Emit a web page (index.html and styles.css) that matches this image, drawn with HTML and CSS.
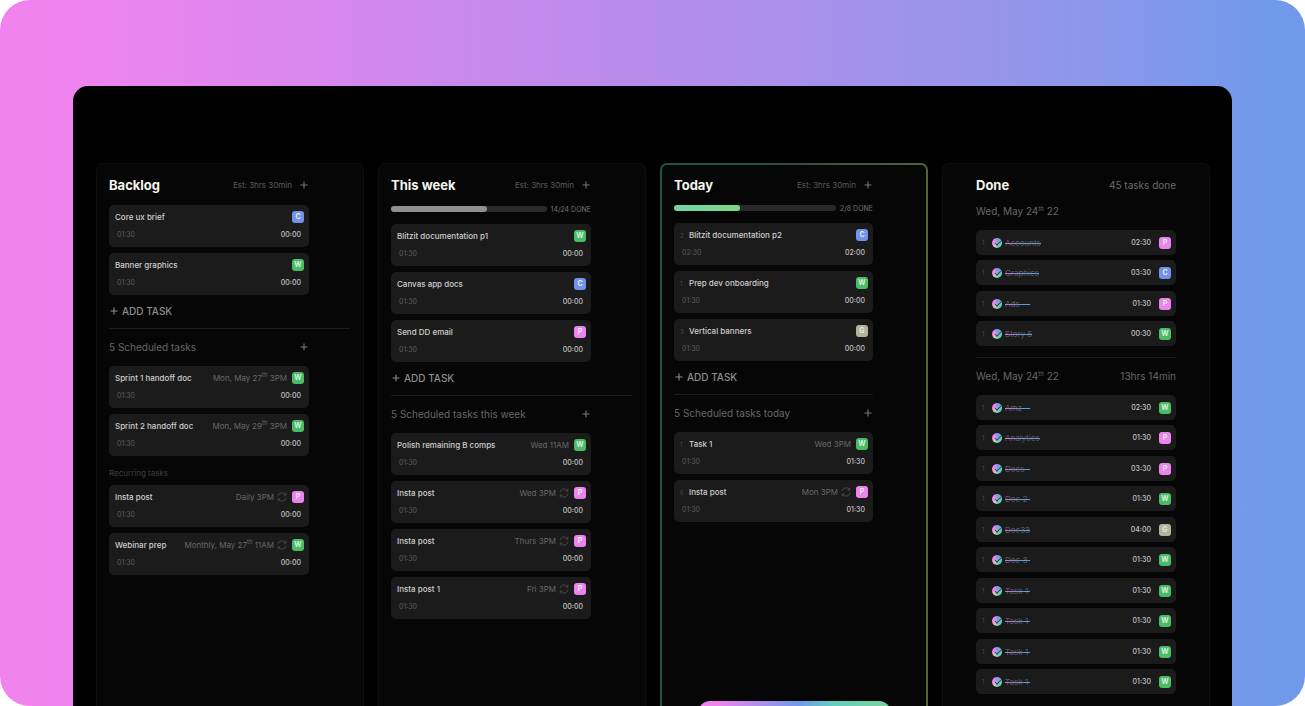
FILE: index.html
```html
<!DOCTYPE html>
<html lang="en">
<head>
<meta charset="utf-8">
<title>Task board</title>
<link rel="stylesheet" href="styles.css">
</head>
<body>
<svg class="sprite" aria-hidden="true">
  <symbol id="plus" viewBox="0 0 8 8"><path d="M4 0.5V7.5M0.5 4H7.5" fill="none" stroke="currentColor" stroke-width="1.1"/></symbol>
  <symbol id="repeat" viewBox="0 0 10 10"><path d="M1 4.2A4 4 0 0 1 8.4 2.8M8.8 0.8V3H6.6M9 5.8A4 4 0 0 1 1.6 7.2M1.2 9.2V7H3.4" fill="none" stroke="currentColor" stroke-width="0.8"/></symbol>
</svg>
<div class="stage">
<main class="board">

<section class="column">
  <header class="head"><h2>Backlog</h2><span class="est">Est: 3hrs 30min</span><button class="plus" aria-label="Add to Backlog"><svg><use href="#plus"/></svg></button></header>
  <div class="cards">
    <article class="card"><div class="line"><h3>Core ux brief</h3><b class="badge blue">C</b></div><div class="times"><span>01:30</span><time>00:00</time></div></article>
    <article class="card"><div class="line"><h3>Banner graphics</h3><b class="badge green">W</b></div><div class="times"><span>01:30</span><time>00:00</time></div></article>
  </div>
  <button class="add"><svg><use href="#plus"/></svg>ADD TASK</button>
  <hr class="rule wide">
  <div class="subhead"><span>5 Scheduled tasks</span><button class="plus" aria-label="Schedule a task"><svg><use href="#plus"/></svg></button></div>
  <div class="cards">
    <article class="card"><div class="line"><h3>Sprint 1 handoff doc</h3><span class="when">Mon, May 27<sup>th</sup> 3PM</span><b class="badge green">W</b></div><div class="times"><span>01:30</span><time>00:00</time></div></article>
    <article class="card"><div class="line"><h3>Sprint 2 handoff doc</h3><span class="when">Mon, May 29<sup>th</sup> 3PM</span><b class="badge green">W</b></div><div class="times"><span>01:30</span><time>00:00</time></div></article>
  </div>
  <p class="recurring">Recurring tasks</p>
  <div class="cards">
    <article class="card"><div class="line"><h3>Insta post</h3><span class="when">Daily 3PM</span><svg class="repeat"><use href="#repeat"/></svg><b class="badge pink">P</b></div><div class="times"><span>01:30</span><time>00:00</time></div></article>
    <article class="card"><div class="line"><h3>Webinar prep</h3><span class="when">Monthly, May 27<sup>th</sup> 11AM</span><svg class="repeat"><use href="#repeat"/></svg><b class="badge green">W</b></div><div class="times"><span>01:30</span><time>00:00</time></div></article>
  </div>
</section>

<section class="column">
  <header class="head"><h2>This week</h2><span class="est">Est: 3hrs 30min</span><button class="plus" aria-label="Add to This week"><svg><use href="#plus"/></svg></button></header>
  <div class="progress"><div class="track"><div class="fill" style="width:62%"></div></div><span>14/24 DONE</span></div>
  <div class="cards">
    <article class="card"><div class="line"><h3>Blitzit documentation p1</h3><b class="badge green">W</b></div><div class="times"><span>01:30</span><time>00:00</time></div></article>
    <article class="card"><div class="line"><h3>Canvas app docs</h3><b class="badge blue">C</b></div><div class="times"><span>01:30</span><time>00:00</time></div></article>
    <article class="card"><div class="line"><h3>Send DD email</h3><b class="badge pink">P</b></div><div class="times"><span>01:30</span><time>00:00</time></div></article>
  </div>
  <button class="add"><svg><use href="#plus"/></svg>ADD TASK</button>
  <hr class="rule wide">
  <div class="subhead"><span>5 Scheduled tasks this week</span><button class="plus" aria-label="Schedule a task this week"><svg><use href="#plus"/></svg></button></div>
  <div class="cards">
    <article class="card"><div class="line"><h3>Polish remaining B comps</h3><span class="when">Wed 11AM</span><b class="badge green">W</b></div><div class="times"><span>01:30</span><time>00:00</time></div></article>
    <article class="card"><div class="line"><h3>Insta post</h3><span class="when">Wed 3PM</span><svg class="repeat"><use href="#repeat"/></svg><b class="badge pink">P</b></div><div class="times"><span>01:30</span><time>00:00</time></div></article>
    <article class="card"><div class="line"><h3>Insta post</h3><span class="when">Thurs 3PM</span><svg class="repeat"><use href="#repeat"/></svg><b class="badge pink">P</b></div><div class="times"><span>01:30</span><time>00:00</time></div></article>
    <article class="card"><div class="line"><h3>Insta post 1</h3><span class="when">Fri 3PM</span><svg class="repeat"><use href="#repeat"/></svg><b class="badge pink">P</b></div><div class="times"><span>01:30</span><time>00:00</time></div></article>
  </div>
</section>

<section class="column today">
  <header class="head"><h2>Today</h2><span class="est">Est: 3hrs 30min</span><button class="plus" aria-label="Add to Today"><svg><use href="#plus"/></svg></button></header>
  <div class="progress"><div class="track"><div class="fill" style="width:41%"></div></div><span>2/8 DONE</span></div>
  <div class="cards">
    <article class="card"><div class="line"><i class="num">2</i><h3>Blitzit documentation p2</h3><b class="badge blue">C</b></div><div class="times"><span>02:30</span><time>02:00</time></div></article>
    <article class="card"><div class="line"><i class="num">1</i><h3>Prep dev onboarding</h3><b class="badge green">W</b></div><div class="times"><span>01:30</span><time>00:00</time></div></article>
    <article class="card"><div class="line"><i class="num">3</i><h3>Vertical banners</h3><b class="badge tan">G</b></div><div class="times"><span>01:30</span><time>00:00</time></div></article>
  </div>
  <button class="add"><svg><use href="#plus"/></svg>ADD TASK</button>
  <hr class="rule">
  <div class="subhead"><span>5 Scheduled tasks today</span><button class="plus" aria-label="Schedule a task today"><svg><use href="#plus"/></svg></button></div>
  <div class="cards">
    <article class="card"><div class="line"><i class="num">1</i><h3>Task 1</h3><span class="when">Wed 3PM</span><b class="badge green">W</b></div><div class="times"><span>01:30</span><time>01:30</time></div></article>
    <article class="card"><div class="line"><i class="num">6</i><h3>Insta post</h3><span class="when">Mon 3PM</span><svg class="repeat"><use href="#repeat"/></svg><b class="badge pink">P</b></div><div class="times"><span>01:30</span><time>01:30</time></div></article>
  </div>
  <div class="dock"></div>
</section>

<section class="column done">
  <header class="head"><h2>Done</h2><span class="total">45 tasks done</span></header>
  <div class="subhead date"><span>Wed, May 24<sup>th</sup> 22</span></div>
  <ul class="rows">
    <li><i class="num">1</i><label><input type="checkbox" checked><span class="name">Accounts</span></label><time>02:30</time><b class="badge pink">P</b></li>
    <li><i class="num">1</i><label><input type="checkbox" checked><span class="name">Graphics</span></label><time>03:30</time><b class="badge blue">C</b></li>
    <li><i class="num">1</i><label><input type="checkbox" checked><span class="name">Ads</span></label><time>01:30</time><b class="badge pink">P</b></li>
    <li><i class="num">1</i><label><input type="checkbox" checked><span class="name">Story 5</span></label><time>00:30</time><b class="badge green">W</b></li>
  </ul>
  <hr class="rule">
  <div class="subhead"><span>Wed, May 24<sup>th</sup> 22</span><span>13hrs 14min</span></div>
  <ul class="rows">
    <li><i class="num">1</i><label><input type="checkbox" checked><span class="name">Amz</span></label><time>02:30</time><b class="badge green">W</b></li>
    <li><i class="num">1</i><label><input type="checkbox" checked><span class="name">Analytics</span></label><time>01:30</time><b class="badge pink">P</b></li>
    <li><i class="num">1</i><label><input type="checkbox" checked><span class="name">Docs</span></label><time>03:30</time><b class="badge pink">P</b></li>
    <li><i class="num">1</i><label><input type="checkbox" checked><span class="name">Doc 2</span></label><time>01:30</time><b class="badge green">W</b></li>
    <li><i class="num">1</i><label><input type="checkbox" checked><span class="name">Doc33</span></label><time>04:00</time><b class="badge tan">G</b></li>
    <li><i class="num">1</i><label><input type="checkbox" checked><span class="name">Doc 3</span></label><time>01:30</time><b class="badge green">W</b></li>
    <li><i class="num">1</i><label><input type="checkbox" checked><span class="name">Task 1</span></label><time>01:30</time><b class="badge green">W</b></li>
    <li><i class="num">1</i><label><input type="checkbox" checked><span class="name">Task 1</span></label><time>01:30</time><b class="badge green">W</b></li>
    <li><i class="num">1</i><label><input type="checkbox" checked><span class="name">Task 1</span></label><time>01:30</time><b class="badge green">W</b></li>
    <li><i class="num">1</i><label><input type="checkbox" checked><span class="name">Task 1</span></label><time>01:30</time><b class="badge green">W</b></li>
  </ul>
</section>

</main>
</div>
</body>
</html>
```
FILE: styles.css
```css
* { box-sizing: border-box; }
body { margin: 0; background: #fff; font-family: Inter, "Liberation Sans", sans-serif; font-size: 9px; color: #ddd; }
h2, h3, p, ul { margin: 0; padding: 0; }
li { list-style: none; }
button { border: 0; padding: 0; background: none; font: inherit; color: inherit; display: flex; align-items: center; }
i { font-style: normal; }
sup { font-size: 6px; line-height: 0; }
.sprite { position: absolute; width: 0; height: 0; }

.stage { height: 100vh; overflow: hidden; padding: 86px 73px 0; display: flex; border-radius: 30px; background: linear-gradient(90deg, #f183ef 4%, #b78ceb 50%, #8b97eb 84%, #7199ea 97%); }
.board { flex: 1; min-width: 0; display: grid; grid-template-columns: repeat(4, minmax(0, 1fr)); gap: 14px; padding: 77px 22px 0 23px; border-radius: 15px 15px 0 0; background: #000; overflow: hidden; }
.column { display: flex; flex-direction: column; padding: 13px 54px 0 12px; border: 1px solid #0e0e0e; border-bottom: 0; border-radius: 7px 7px 0 0; background: #060606; }
.today { padding: 12px 53px 0 12px; border: 2px solid transparent; border-bottom: 0; background: linear-gradient(#060606, #060606) padding-box, linear-gradient(90deg, #1f5345, #30513f 50%, #556538) border-box; }
.done { padding: 13px 33px 0; }

.head { display: flex; align-items: center; height: 16px; }
.head h2 { flex: 1; font-size: 13px; font-weight: 700; line-height: 16px; color: #f3f5ee; }
.est { color: #5c5c5c; font-size: 8px; }
.total { color: #6a6a6a; font-size: 10px; }
.plus { color: #777; margin: 0 1px 0 8px; }
.plus svg, .add svg { width: 8px; height: 8px; }

.progress { display: flex; align-items: center; gap: 4px; height: 8px; margin: 12px 0 -1px; font-size: 7px; color: #757575; }
.today .progress { margin-top: 11px; }
.track { flex: 1; height: 6px; border-radius: 3px; background: #2a2a2a; }
.fill { height: 6px; border-radius: 3px; background: #8f8f8b; }
.today .fill { background: linear-gradient(90deg, #6fd6a8, #7fd684); }

.cards { display: grid; gap: 6px; margin-top: 12px; }
.card { padding: 6px 5px 7px 6px; border-radius: 5px; background: #1b1b1b; }
.line { display: flex; align-items: center; height: 12px; white-space: nowrap; }
.line h3 { flex: 1; font-size: 8px; font-weight: 500; line-height: 12px; color: #cfcfcf; }
.when { color: #686868; font-size: 8px; line-height: 12px; }
.repeat { width: 10px; height: 10px; margin-left: 3px; color: #565656; }
.badge { display: grid; place-items: center; flex: none; width: 12px; height: 12px; margin-left: 5px; border-radius: 3px; font-size: 7px; font-weight: 700; line-height: 12px; color: #dfeee2; }
.blue { background: #7592ea; }
.green { background: #49bd66; }
.pink { background: #ec84ee; }
.tan { background: #b5b399; }
.times { display: flex; justify-content: space-between; margin: 7px 3px 0 2px; font-size: 7px; line-height: 10px; color: #5e5e5e; }
time { color: #c4c4c4; font-size: 7px; font-weight: 500; }
.num { width: 9px; font-size: 6px; color: #4a4a4a; }

.add { gap: 4px; height: 16px; margin: 8px 0 0 1px; font-size: 10px; font-weight: 500; color: #8d8d8d; }
.rule { width: 100%; height: 1px; margin: 9px 0 10px; border: 0; background: #1c1c1c; }
.wide { width: auto; margin-right: -41px; }
.subhead { display: flex; align-items: center; justify-content: space-between; height: 16px; font-size: 10px; color: #666; }
.subhead + .cards, .subhead + .rows { margin-top: 11px; }
.recurring { margin-top: 11px; font-size: 8px; line-height: 12px; color: #3f3f3f; }
.recurring + .cards { margin-top: 6px; }
.dock { flex: none; height: 40px; margin: auto -18px -35px 24px; border-radius: 12px; background: linear-gradient(90deg, #ee84ee 10%, #7199ea 52%, #62cfc0 70%, #7bd19a); }

.date { margin-top: 10px; }
.done .rule { margin-top: 11px; }
.rows li { display: flex; align-items: center; height: 25px; margin-bottom: 5px; padding: 0 5px 0 6px; border-radius: 5px; background: #1b1b1b; }
.rows li:nth-child(even) { margin-bottom: 6px; }
.rows li:last-child { margin-bottom: 0; }
.rows .num { width: 10px; }
.rows label { flex: 1; display: flex; align-items: center; gap: 3px; }
.rows input { appearance: none; position: relative; width: 10px; height: 10px; margin: 0; border-radius: 5px; background: conic-gradient(#7199ea, #62cfc0 25%, #62cfc0 45%, #c9d0a8 60%, #ee84ee 75%, #ee84ee 90%, #7199ea); }
.rows input::after { content: ""; position: absolute; left: 3px; top: 3px; width: 5px; height: 2px; border: solid #3a3a4a; border-width: 0 0 1px 1px; transform: rotate(-45deg); }
.name { position: relative; min-width: 25px; font-size: 8px; line-height: 12px; color: #5e5e5e; }
.name::after { content: ""; position: absolute; left: 0; right: 0; top: 6px; height: 1px; background: linear-gradient(90deg, #c873cf, #6f8fe0 50%, #5f9fd0); }
.rows .badge { margin-left: 8px; }
```
